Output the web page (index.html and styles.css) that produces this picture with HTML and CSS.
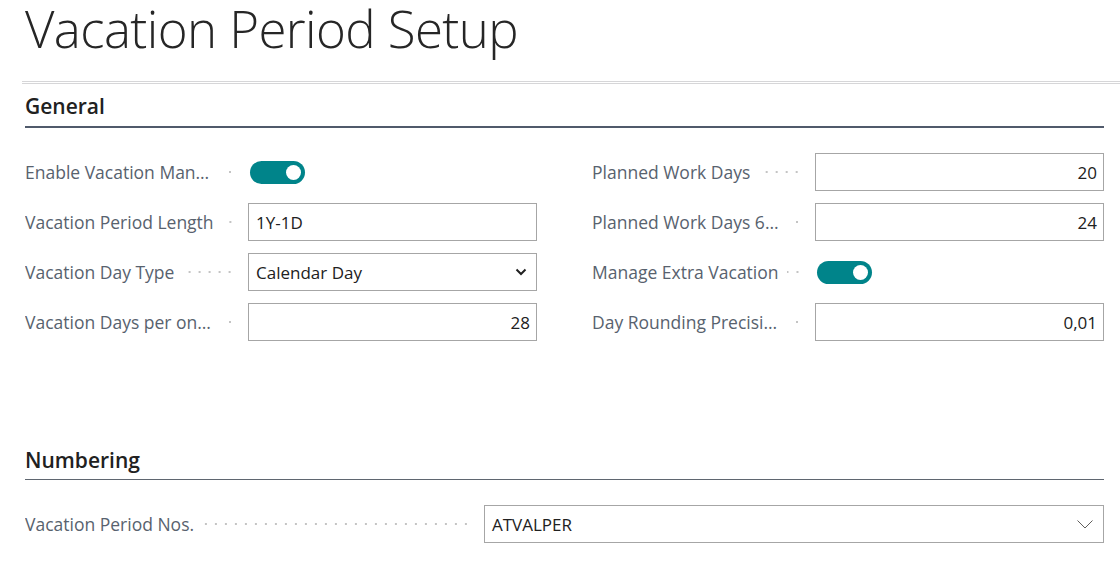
FILE: index.html
```html
<!DOCTYPE html>
<html lang="en">
<head>
<meta charset="utf-8">
<title>Vacation Period Setup</title>
<link rel="stylesheet" href="styles.css">
</head>
<body>
<div class="page">
  <h1 class="title">Vacation Period Setup</h1>
  <div class="rule-double"></div>

  <section class="section general">
    <h2 class="section-head active">General</h2>
    <div class="grid">
      <div class="col">
        <div class="field">
          <div class="label"><span class="text">Enable Vacation Management</span><span class="leader"></span></div>
          <div class="control"><span class="toggle"><span class="knob"></span></span></div>
        </div>
        <div class="field">
          <div class="label"><span class="text">Vacation Period Length</span><span class="leader"></span></div>
          <div class="control"><div class="input">1Y-1D</div></div>
        </div>
        <div class="field">
          <div class="label"><span class="text">Vacation Day Type</span><span class="leader"></span></div>
          <div class="control"><div class="input select"><span>Calendar Day</span>
            <svg class="chev-bold" width="12" height="8" viewBox="0 0 12 8"><polyline points="1.5,1.5 6,6 10.5,1.5" fill="none" stroke="#212121" stroke-width="2"/></svg></div></div>
        </div>
        <div class="field">
          <div class="label"><span class="text">Vacation Days per one Year</span><span class="leader"></span></div>
          <div class="control"><div class="input num">28</div></div>
        </div>
      </div>
      <div class="col">
        <div class="field">
          <div class="label"><span class="text">Planned Work Days</span><span class="leader"></span></div>
          <div class="control"><div class="input num">20</div></div>
        </div>
        <div class="field">
          <div class="label"><span class="text">Planned Work Days 6-day Week</span><span class="leader"></span></div>
          <div class="control"><div class="input num">24</div></div>
        </div>
        <div class="field">
          <div class="label"><span class="text">Manage Extra Vacation</span><span class="leader"></span></div>
          <div class="control"><span class="toggle"><span class="knob"></span></span></div>
        </div>
        <div class="field">
          <div class="label"><span class="text">Day Rounding Precision</span><span class="leader"></span></div>
          <div class="control"><div class="input num">0,01</div></div>
        </div>
      </div>
    </div>
  </section>

  <section class="section numbering">
    <h2 class="section-head">Numbering</h2>
    <div class="field wide">
      <div class="label"><span class="text">Vacation Period Nos.</span><span class="leader"></span></div>
      <div class="control"><div class="input select"><span>ATVALPER</span>
        <svg class="chev-thin" width="16" height="9" viewBox="0 0 16 9"><polyline points="0.5,0.5 8,8 15.5,0.5" fill="none" stroke="#605e5c" stroke-width="1"/></svg></div></div>
    </div>
  </section>
</div>
</body>
</html>
```

FILE: styles.css
```css
* { box-sizing: border-box; }
html, body { margin: 0; padding: 0; background: #ffffff; }
body {
  font-family: "Open Sans", "Noto Sans", "Liberation Sans", sans-serif;
  color: #212121;
  width: 1120px;
  height: 561px;
  overflow: hidden;
}
.page { padding: 0 16px 0 25px; }

.title {
  margin: 0;
  font-weight: 300;
  font-size: 51px;
  line-height: 56px;
  color: #262626;
  letter-spacing: -0.6px;
  white-space: nowrap;
}
.rule-double {
  margin: 25px -16px 0 -3px;
  height: 3px;
  border-top: 1px solid #d6d6d8;
  border-bottom: 1px solid #d6d6d8;
}

.section-head {
  margin: 0;
  font-size: 21px;
  font-weight: 600;
  line-height: 28px;
  color: #212121;
  padding-bottom: 6px;
  border-bottom: 1px solid #5f6670;
}
.section-head.active {
  border-bottom: 2px solid #505a6b;
}
.general .section-head { margin-top: 8px; }

.grid {
  display: grid;
  grid-template-columns: 512px 512px;
  column-gap: 55px;
  margin-top: 25px;
}
.field {
  display: flex;
  align-items: center;
  height: 38px;
  margin-bottom: 12px;
}
.label {
  width: 223px;
  flex: none;
  display: flex;
  align-items: center;
  font-size: 17.5px;
  color: #58626e;
  padding-right: 13px;
}
.label .text {
  flex: 0 1 auto;
  min-width: 0;
  white-space: nowrap;
  overflow: hidden;
  text-overflow: ellipsis;
}
.label .leader {
  flex: 1 0 10px;
  margin-left: 8px;
  height: 4px;
  background-image: radial-gradient(circle, #c4c4c4 0.9px, transparent 1.3px);
  background-size: 10px 4px;
  background-repeat: repeat-x;
  background-position: right center;
}
.control {
  flex: 1;
  display: flex;
  align-items: center;
}
.input {
  width: 100%;
  height: 38px;
  border: 1px solid #a6a6a6;
  background: #fff;
  font-size: 17px;
  color: #212121;
  padding: 0 6px 0 7px;
  display: flex;
  align-items: center;
  white-space: nowrap;
}
.input.num { justify-content: flex-end; }
.input.select { justify-content: space-between; }
.chev-bold { margin-right: 3px; }
.chev-thin { margin-right: 4px; }

.toggle {
  position: relative;
  display: inline-block;
  width: 55px;
  height: 23px;
  border-radius: 12px;
  background: #00848a;
  margin-left: 2px;
}
.knob {
  position: absolute;
  right: 4px;
  top: 4px;
  width: 15px;
  height: 15px;
  border-radius: 50%;
  background: #ffffff;
}

.numbering { margin-top: 93px; }
.numbering .section-head { padding-bottom: 5px; }
.field.wide { margin-top: 25px; }
.field.wide .label { width: 459px; }
```
